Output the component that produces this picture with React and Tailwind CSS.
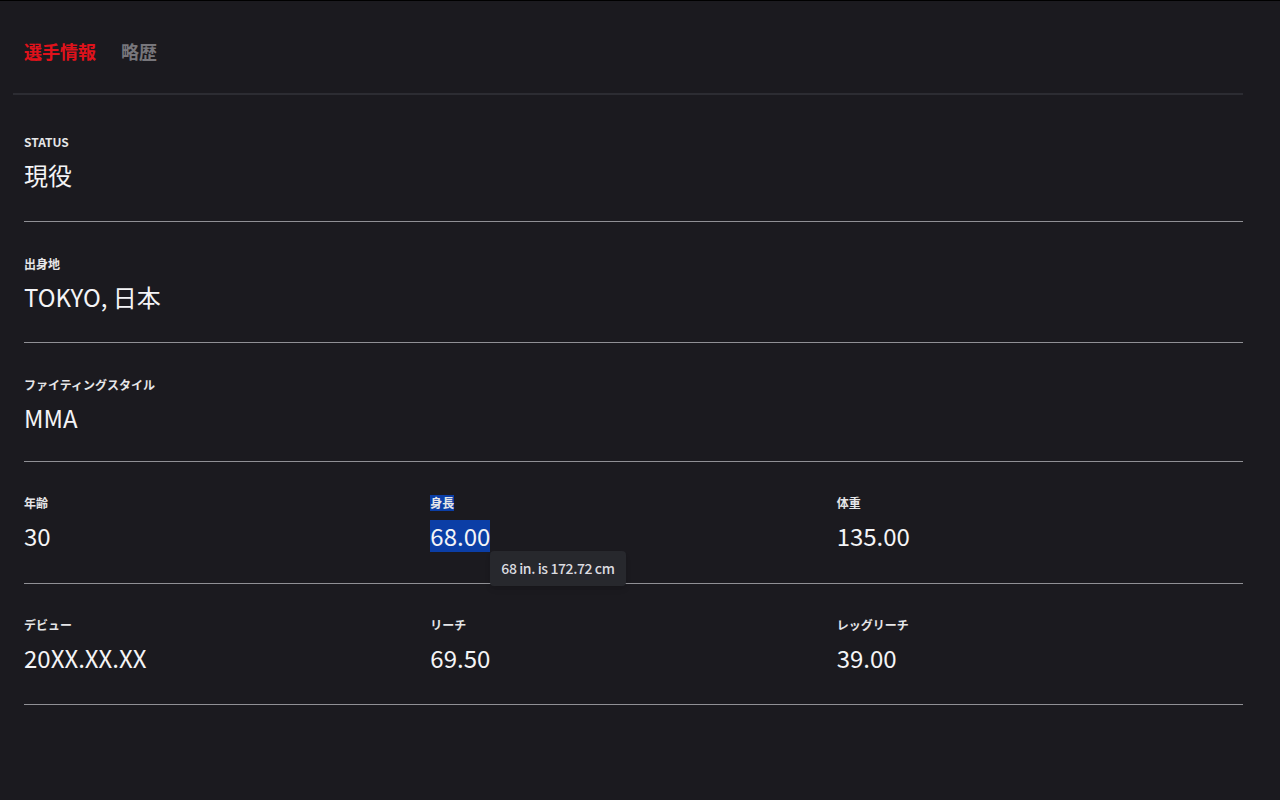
const font = { fontFamily: '"Noto Sans CJK JP", "Noto Sans", sans-serif' };

// 一行ぶんの項目
function Field({ label, value, selected }) {
  return (
    <div className="flex flex-col">
      <div className="h-4 flex items-center">
        <span
          className={`text-[12px] font-bold leading-4 text-[#e6e6e8] ${selected ? "bg-[#0b3ea6]" : ""}`}
        >
          {label}
        </span>
      </div>
      <div className="mt-[9px] h-8 flex items-center">
        <span
          className={`text-[24px] leading-8 text-[#f4f4f6] ${selected ? "bg-[#0b3ea6]" : ""}`}
        >
          {value}
        </span>
      </div>
    </div>
  );
}

function Row({ children, pad, cols }) {
  return (
    <div className={`border-b border-[#909095] ${pad} ${cols ? "grid grid-cols-3" : ""}`}>
      {children}
    </div>
  );
}

export default function App() {
  return (
    <div className="min-h-[800px] w-full bg-[#1b1a1f] border-t border-black" style={font}>
      {/* Tabs */}
      <div className="mx-[13px] w-[1230px] h-[94px] border-b-2 border-[#2c2c32] flex items-center pl-[11px] pt-[8px] gap-[25px]">
        <span className="text-[18px] font-bold text-[#e0121b]">選手情報</span>
        <span className="text-[18px] font-bold text-[#77767b]">略歴</span>
      </div>

      <div className="ml-[24px] w-[1219px]">
        <Row pad="pt-[39px] pb-[30px]">
          <Field label="STATUS" value="現役" />
        </Row>
        <Row pad="pt-[34px] pb-[29px]">
          <Field label="出身地" value="TOKYO, 日本" />
        </Row>
        <Row pad="pt-[34px] pb-[27px]">
          <Field label="ファイティングスタイル" value="MMA" />
        </Row>
        <Row cols pad="pt-[33px] pb-[31px]">
          <Field label="年齢" value="30" />
          <div className="relative">
            <Field label="身長" value="68.00" selected />
            <div className="absolute left-[60px] top-[56px] h-[35px] px-[11px] flex items-center rounded bg-[#27282d] shadow-md text-[14px] font-medium tracking-[-0.4px] text-[#dcdce0] whitespace-nowrap">
              68 in. is 172.72 cm
            </div>
          </div>
          <Field label="体重" value="135.00" />
        </Row>
        <Row cols pad="pt-[33px] pb-[30px]">
          <Field label="デビュー" value="20XX.XX.XX" />
          <Field label="リーチ" value="69.50" />
          <Field label="レッグリーチ" value="39.00" />
        </Row>
      </div>
    </div>
  );
}
